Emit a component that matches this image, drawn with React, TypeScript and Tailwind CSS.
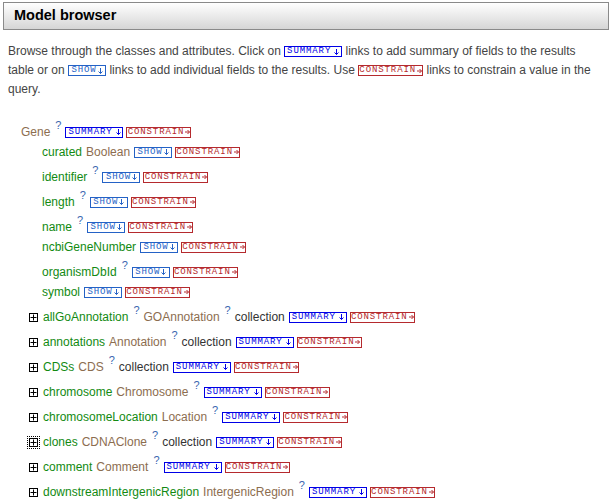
import React from "react";

type TagKind = "summary" | "show" | "constrain";

const TAGS: Record<TagKind, { label: string; cls: string; arrow: "down" | "right" }> = {
  summary: {
    label: "SUMMARY",
    cls: "w-[58px] gap-[3px] border-[#0000e6] text-[#0000e6]",
    arrow: "down",
  },
  show: { label: "SHOW", cls: "w-[38px] gap-[1px] border-[#2462c6] text-[#2462c6]", arrow: "down" },
  constrain: {
    label: "CONSTRAIN",
    cls: "w-[65px] gap-[1px] border-[#b52a2e] text-[#b52a2e]",
    arrow: "right",
  },
};

function Arrow({ dir }: { dir: "down" | "right" }) {
  return (
    <svg width="5" height="6" viewBox="0 0 5 6" className="shrink-0">
      {dir === "down" ? (
        <path d="M2.5 0v5.5M0.5 3.5l2 2 2-2" stroke="currentColor" strokeWidth="1" fill="none" />
      ) : (
        <path d="M0 3h4.5M2.5 1l2 2-2 2" stroke="currentColor" strokeWidth="1" fill="none" />
      )}
    </svg>
  );
}

function Tag({ kind }: { kind: TagKind }) {
  const t = TAGS[kind];
  return (
    <span
      className={`inline-flex h-[11px] items-center justify-center border align-middle font-['Liberation_Mono',monospace] text-[9px] leading-none tracking-[0.9px] ${t.cls}`}
    >
      <span>{t.label}</span>
      <Arrow dir={t.arrow} />
    </span>
  );
}

function Q() {
  return (
    <span className="-mt-[3px] ml-[5px] self-start text-[11px] leading-[12px] text-[#3a66b0]">
      ?
    </span>
  );
}

function Plus({ focused }: { focused?: boolean }) {
  return (
    <span
      className={`mr-[5px] flex h-[9px] w-[9px] items-center justify-center border border-black ${
        focused ? "outline-1 outline-offset-1 outline-dotted outline-black" : ""
      }`}
    >
      <svg width="7" height="7" viewBox="0 0 7 7">
        <path d="M3.5 0.5v6M0.5 3.5h6" stroke="#000" strokeWidth="1" />
      </svg>
    </span>
  );
}

const ATTRS: { name: string; type?: string; q: boolean }[] = [
  { name: "curated", type: "Boolean", q: false },
  { name: "identifier", q: true },
  { name: "length", q: true },
  { name: "name", q: true },
  { name: "ncbiGeneNumber", q: false },
  { name: "organismDbId", q: true },
  { name: "symbol", q: false },
];

const REFS: { name: string; type: string; nameQ?: boolean; coll: boolean; focused?: boolean }[] = [
  { name: "allGoAnnotation", type: "GOAnnotation", nameQ: true, coll: true },
  { name: "annotations", type: "Annotation", coll: true },
  { name: "CDSs", type: "CDS", coll: true },
  { name: "chromosome", type: "Chromosome", coll: false },
  { name: "chromosomeLocation", type: "Location", coll: false },
  { name: "clones", type: "CDNAClone", coll: true, focused: true },
  { name: "comment", type: "Comment", coll: false },
  { name: "downstreamIntergenicRegion", type: "IntergenicRegion", coll: false },
];

export default function App() {
  return (
    <div className="min-h-[502px] w-[612px] bg-white pt-[2px] font-['Liberation_Sans',Arial,sans-serif]">
      <div className="mx-[3px] flex h-[28px] items-center border border-[#8a8a8a] bg-linear-to-b from-white to-[#d6d6d6] pl-[10px] text-[14.5px] font-bold text-black">
        Model browser
      </div>

      <p className="mt-[12px] px-[8px] text-[12px] leading-[19px] text-[#444]">
        Browse through the classes and attributes. Click on <Tag kind="summary" /> links to add
        summary of fields to the results table or on <Tag kind="show" /> links to add individual
        fields to the results. Use <Tag kind="constrain" /> links to constrain a value in the
        query.
      </p>

      <div className="mt-[23px] text-[12px]">
        <div className="mt-[5px] flex h-[20px] items-center pl-[21px]">
          <span className="text-[#8c6d4f]">Gene</span>
          <Q />
          <span className="ml-[4px] flex gap-[3px]">
            <Tag kind="summary" />
            <Tag kind="constrain" />
          </span>
        </div>

        <div className="pl-[42px]">
          {ATTRS.map((a) => (
            <div key={a.name} className={`flex h-[20px] items-center ${a.q ? "mt-[5px]" : ""}`}>
              <span className="text-[#128a12]">{a.name}</span>
              {a.type && <span className="ml-[4px] text-[#8c6d4f]">{a.type}</span>}
              {a.q && <Q />}
              <span className="ml-[4px] flex gap-[3px]">
                <Tag kind="show" />
                <Tag kind="constrain" />
              </span>
            </div>
          ))}
        </div>

        <div className="pl-[29px]">
          {REFS.map((r) => (
            <div key={r.name} className="mt-[5px] flex h-[20px] items-center">
              <Plus focused={r.focused} />
              <span className="text-[#128a12]">{r.name}</span>
              {r.nameQ && <Q />}
              <span className="ml-[4px] text-[#8c6d4f]">{r.type}</span>
              <Q />
              {r.coll && <span className="ml-[4px] text-[#333]">collection</span>}
              <span className="ml-[4px] flex gap-[3px]">
                <Tag kind="summary" />
                <Tag kind="constrain" />
              </span>
            </div>
          ))}
        </div>
      </div>
    </div>
  );
}
